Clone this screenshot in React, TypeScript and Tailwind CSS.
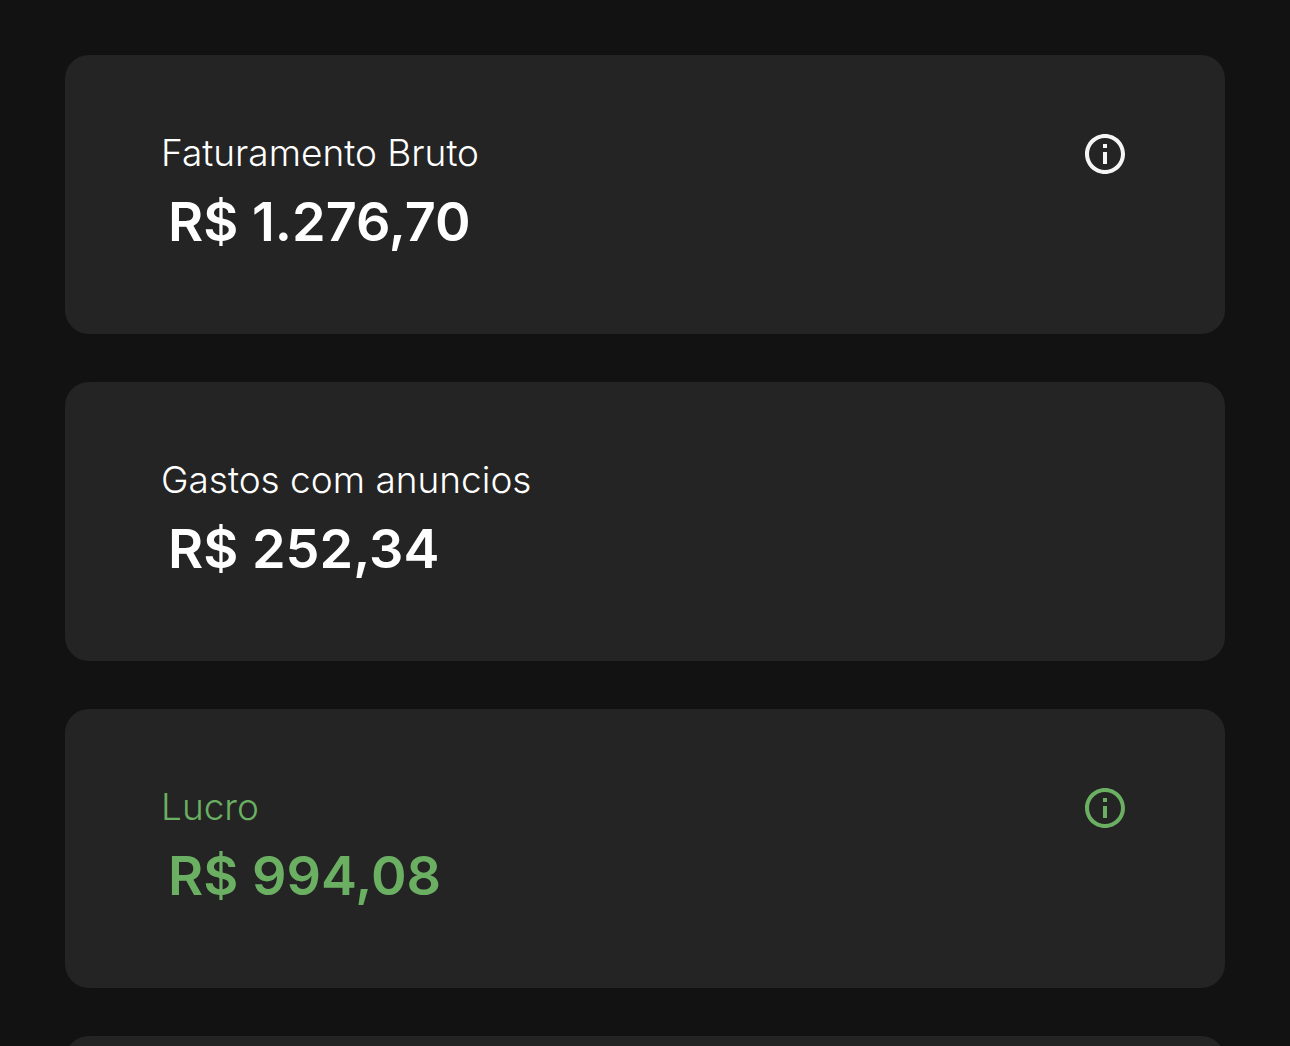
import { MdInfoOutline } from "react-icons/md";

interface Metric {
  label: string;
  value: string;
  tone: "default" | "profit";
  hasInfo: boolean;
}

const metrics: Metric[] = [
  { label: "Faturamento Bruto", value: "R$ 1.276,70", tone: "default", hasInfo: true },
  { label: "Gastos com anuncios", value: "R$ 252,34", tone: "default", hasInfo: false },
  { label: "Lucro", value: "R$ 994,08", tone: "profit", hasInfo: true },
];

const cardClassName = "min-h-[279px] shrink-0 rounded-3xl bg-[#242424]";

function MetricCard({ label, value, tone, hasInfo }: Metric) {
  const textColor = tone === "profit" ? "text-[#6aaf62]" : "text-white";
  const iconColor = tone === "profit" ? "text-[#6aaf62]" : "text-[#f5f5f5]";

  return (
    <section className={`${cardClassName} flex items-start justify-between px-24 pt-[75px] ${textColor}`}>
      <div>
        <h2 className="text-[37px] leading-[46px] font-light">{label}</h2>
        <p className="mt-4 pl-[7px] text-[54px] leading-[60px] font-semibold">{value}</p>
      </div>
      {hasInfo && (
        <button type="button" aria-label={`Sobre ${label}`} className={`shrink-0 ${iconColor}`}>
          <MdInfoOutline className="size-12" />
        </button>
      )}
    </section>
  );
}

export default function App() {
  return (
    <main className="flex h-screen flex-col gap-12 overflow-hidden bg-[#121212] px-[65px] pt-[55px] font-['Inter','Noto_Sans',sans-serif]">
      {metrics.map((metric) => (
        <MetricCard key={metric.label} {...metric} />
      ))}
      {/* next card, cut off by the fold */}
      <div className={cardClassName} />
    </main>
  );
}
